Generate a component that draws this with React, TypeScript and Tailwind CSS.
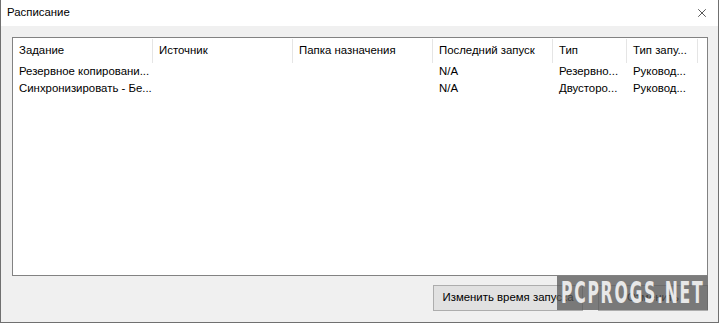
import { X } from 'lucide-react';

const columns = [
  { title: 'Задание', width: 'w-[140px]' },
  { title: 'Источник', width: 'w-[140px]' },
  { title: 'Папка назначения', width: 'w-[140px]' },
  { title: 'Последний запуск', width: 'w-[120px]' },
  { title: 'Тип', width: 'w-[74px]' },
  { title: 'Тип запу...', width: 'w-[71px]' },
];

const rows = [
  ['Резервное копировани...', '', '', 'N/A', 'Резервно...', 'Руковод...'],
  ['Синхронизировать - Бе...', '', '', 'N/A', 'Двусторо...', 'Руковод...'],
];

export default function App() {
  return (
    <div className="relative w-[719px] h-[323px] flex flex-col bg-white border-x border-b border-[#707070] text-[11.4px] text-black font-['Liberation_Sans',Arial,sans-serif]">
      {/* Заголовок окна */}
      <div className="h-[26px] flex items-center justify-between pl-[6px] pr-[9px] bg-white">
        <span>Расписание</span>
        <X className="w-[14px] h-[14px] text-[#111]" strokeWidth={1.2} />
      </div>

      {/* Тело окна */}
      <div className="flex-1 flex flex-col bg-[#f0f0f0] pt-[11px] pl-[11px]">
        <div className="w-[696px] h-[239px] bg-white border border-[#828282]">
          <div className="flex h-[25px]">
            {columns.map((col, i) => (
              <div key={i} className={`${col.width} flex items-center`}>
                <span className="flex-1 pl-[6px] whitespace-nowrap overflow-hidden">{col.title}</span>
                <div className="w-px h-[24px] bg-[#e5e5e5]" />
              </div>
            ))}
          </div>
          {rows.map((row, r) => (
            <div key={r} className="flex h-[17px] items-center">
              {row.map((cell, c) => (
                <div key={c} className={`${columns[c].width} pl-[6px] whitespace-nowrap overflow-hidden`}>
                  {cell}
                </div>
              ))}
            </div>
          ))}
        </div>

        <div className="flex justify-end gap-[15px] pr-[10px] mt-[9px]">
          <button className="w-[150px] h-[26px] bg-[#e1e1e1] border border-[#adadad] whitespace-nowrap">
            Изменить время запуска
          </button>
          <button className="w-[110px] h-[26px] bg-[#e1e1e1] border border-[#adadad] whitespace-nowrap">
            Отменить
          </button>
        </div>
      </div>

      {/* Водяной знак */}
      <div className="absolute left-[556px] top-[276px] w-[151px] h-[34px] flex items-center justify-center bg-[#555555]/75">
        <span className="shrink-0 text-[#e8e8e8] text-[30px] font-bold tracking-[3px] leading-none whitespace-nowrap scale-x-[0.58] font-['DejaVu_Sans_Condensed','DejaVu_Sans',sans-serif] [font-stretch:condensed]">
          PCPROGS.NET
        </span>
      </div>
    </div>
  );
}
